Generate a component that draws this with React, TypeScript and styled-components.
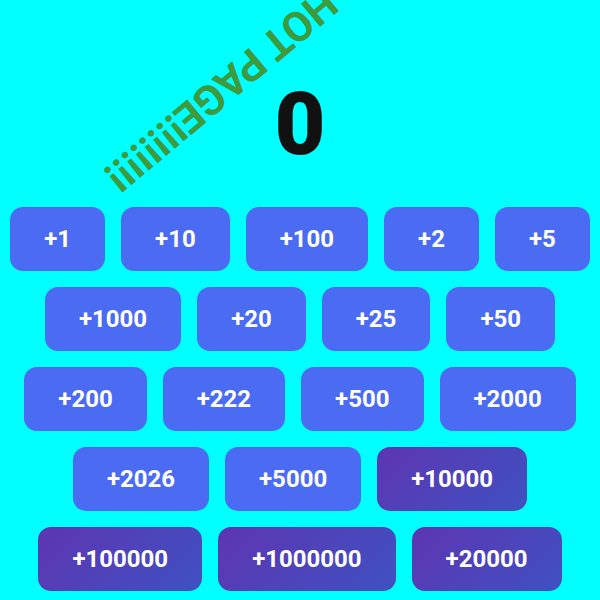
import React from "react";
import styled, { createGlobalStyle } from "styled-components";

const Global = createGlobalStyle`
  html, body { margin: 0; padding: 0; background: #00ffff; }
  body { font-family: Roboto, "Liberation Sans", sans-serif; }
`;

const Page = styled.div`
  position: relative;
  width: 600px;
  height: 600px;
  overflow: hidden;
  box-sizing: border-box;
  padding: 0 10px;
  background: #00ffff;
`;

const Banner = styled.div`
  position: absolute;
  left: 231px;
  top: 81px;
  transform: translate(-50%, -50%) rotate(140deg);
  white-space: nowrap;
  font-family: Roboto, "Liberation Sans", sans-serif;
  font-weight: 700;
  font-size: 42px;
  line-height: 1;
  color: #3d9a3d;
`;

const Counter = styled.div`
  margin: 80px 0 39px;
  text-align: center;
  font-family: Roboto, sans-serif;
  font-weight: 900;
  font-size: 88px;
  line-height: 88px;
  height: 88px;
  color: #111111;
`;

const Grid = styled.div`
  display: flex;
  flex-wrap: wrap;
  justify-content: center;
  gap: 16px;
`;

const Btn = styled.button<{ $big?: boolean }>`
  box-sizing: border-box;
  height: 64px;
  padding: 0 34px;
  border: none;
  border-radius: 13px;
  background: ${(p) =>
    p.$big ? "linear-gradient(135deg, #5e35b1 0%, #3f51c2 100%)" : "#4b6cf2"};
  color: #ffffff;
  font-family: Roboto, sans-serif;
  font-weight: 700;
  font-size: 24px;
  line-height: 28px;
  cursor: pointer;
`;

const values = [
  1, 10, 100, 2, 5, 1000, 20, 25, 50, 200, 222, 500, 2000, 2026, 5000, 10000,
  100000, 1000000, 20000,
];
const big = new Set([10000, 100000, 1000000, 20000]);

export default function App() {
  const [count, setCount] = React.useState(0);
  return (
    <Page>
      <Global />
      <Banner>- HOT PAGE!!!!!!!!</Banner>
      <Counter>{count}</Counter>
      <Grid>
        {values.map((v) => (
          <Btn key={v} $big={big.has(v)} onClick={() => setCount((c) => c + v)}>
            +{v}
          </Btn>
        ))}
      </Grid>
    </Page>
  );
}
